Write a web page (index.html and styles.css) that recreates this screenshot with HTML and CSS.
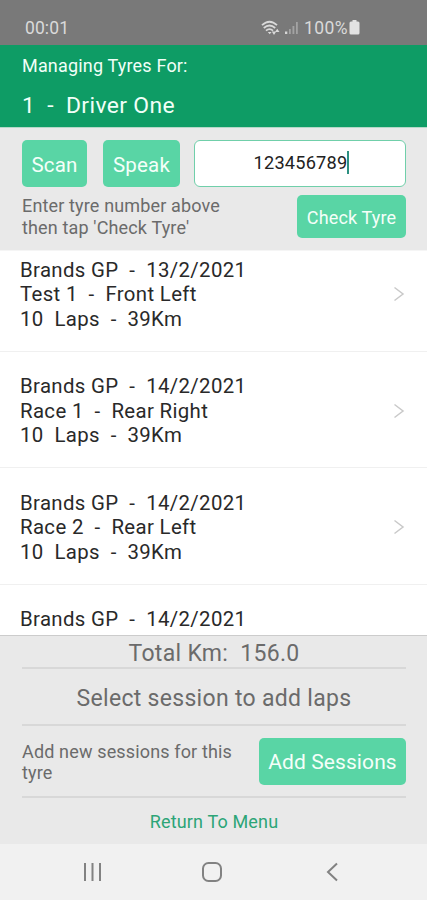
FILE: index.html
```html
<!DOCTYPE html>
<html lang="en">
<head>
<meta charset="utf-8">
<title>Managing Tyres</title>
<link rel="stylesheet" href="styles.css">
</head>
<body>
<div class="screen">
  <div class="status">
    <span class="clock">00:01</span>
    <svg class="wifi" width="20" height="16" viewBox="0 0 20 16" fill="none" stroke="#dadada" stroke-width="1.8"><path d="M1 5.200Q8.500-1.800 16 5.200M2.800 8Q8.500 3 14.200 8M5 10.700Q8.500 7.600 12 10.700"/><path d="M6.800 12l1.900 2.200 1.900-2.200zM10.800 11.500h4.400l-2.200 3.500zM14 12l2.200-3.200 2.300 3.200z" fill="#dadada" stroke="none"/></svg>
    <svg class="signal" width="14" height="14" viewBox="0 0 14 14"><path fill="#d6d6d6" d="M0 10.500h2.300V13H0z"/><path fill="#a3a3a3" d="M4 8h1.800v5H4zM7.500 5h1.800v8H7.500zM11 1h1.800v12H11z"/></svg>
    <span class="percent">100%</span>
    <svg class="battery" width="11" height="15" viewBox="0 0 11 15"><path fill="#e2e2e2" d="M3.500 0h4v1.500h1.500q1.500 0 1.500 1.500v10q0 1.500-1.500 1.500H2Q.5 14.500.5 13V3Q.5 1.500 2 1.500h1.500z"/></svg>
  </div>
  <header class="header">
    <div class="caption">Managing Tyres For:</div>
    <div class="driver">1&nbsp; -&nbsp; Driver One</div>
  </header>
  <section class="search">
    <div class="tools">
      <button class="btn scan">Scan</button>
      <button class="btn speak">Speak</button>
      <div class="field"><span>123456789</span><i class="caret"></i></div>
    </div>
    <div class="check-row">
      <p class="hint">Enter tyre number above<br>then tap 'Check Tyre'</p>
      <button class="btn check">Check Tyre</button>
    </div>
  </section>
  <main class="list">
    <article class="item"><p>Brands GP&nbsp; -&nbsp; 13/2/2021<br>Test 1&nbsp; -&nbsp; Front Left<br>10&nbsp; Laps&nbsp; -&nbsp; 39Km</p><svg class="chev" width="12" height="16" viewBox="0 0 12 16"><path d="M1.500 1.500l8.500 6.500-8.500 6.500"/></svg></article>
    <article class="item"><p>Brands GP&nbsp; -&nbsp; 14/2/2021<br>Race 1&nbsp; -&nbsp; Rear Right<br>10&nbsp; Laps&nbsp; -&nbsp; 39Km</p><svg class="chev" width="12" height="16" viewBox="0 0 12 16"><path d="M1.500 1.500l8.500 6.500-8.500 6.500"/></svg></article>
    <article class="item"><p>Brands GP&nbsp; -&nbsp; 14/2/2021<br>Race 2&nbsp; -&nbsp; Rear Left<br>10&nbsp; Laps&nbsp; -&nbsp; 39Km</p><svg class="chev" width="12" height="16" viewBox="0 0 12 16"><path d="M1.500 1.500l8.500 6.500-8.500 6.500"/></svg></article>
    <article class="item"><p>Brands GP&nbsp; -&nbsp; 14/2/2021</p></article>
  </main>
  <section class="summary">
    <div class="total">Total Km:&nbsp; 156.0</div>
    <div class="select">Select session to add laps</div>
    <div class="add-row">
      <p class="hint">Add new sessions for this<br>tyre</p>
      <button class="btn add">Add Sessions</button>
    </div>
    <a class="return">Return To Menu</a>
  </section>
  <nav class="nav">
    <svg width="20" height="20" viewBox="0 0 20 20"><path d="M2 1v18M9.500 1v18M17 1v18"/></svg>
    <svg width="22" height="22" viewBox="0 0 22 22"><rect x="2" y="2" width="18" height="18" rx="5.500"/></svg>
    <svg width="14" height="20" viewBox="0 0 14 20"><path d="M12 1.500L3 10l9 8.500"/></svg>
  </nav>
</div>
</body>
</html>
```
FILE: styles.css
```css
* { box-sizing: border-box; }
body { margin: 0; font-family: Roboto, "Liberation Sans", sans-serif; }
p { margin: 0; }
span, p, a, button { white-space: nowrap; }
.screen { width: 427px; height: 900px; display: flex; flex-direction: column; overflow: hidden; background: #fff; }
.status { height: 45px; flex: none; background: #797979; color: #dadada; display: flex; align-items: center; padding: 10px 67px 0 25px; font-size: 17.5px; }
.clock { flex: 1; letter-spacing: 0.1px; }
.wifi { margin-right: 4px; }
.signal { margin-right: 5px; }
.percent { letter-spacing: 0.4px; margin-right: 1px; }
.header { height: 82px; flex: none; background: #0e9c65; color: #f1fff8; padding: 9px 22px 0; }
.caption { font-size: 18px; line-height: 24px; letter-spacing: 0.18px; }
.driver { font-size: 22.9px; line-height: 28px; margin-top: 14px; letter-spacing: 0.35px; }
.search { height: 123px; flex: none; background: #e9e9e9; padding: 12px 21px 0 22px; border-top: 1px solid #b4d8c8; }
.tools { display: flex; height: 47px; }
.btn { border: 0; border-radius: 5px; background: #59d5a5; color: #f4fff9; font: 20px Roboto, sans-serif; padding: 0; }
.scan, .speak { font-size: 20.5px; letter-spacing: 0.2px; }
.scan { width: 65px; margin-right: 16px; padding-top: 2px; }
.speak { width: 77px; margin-right: 14px; padding-top: 2px; }
.field { flex: 1; background: #fff; border: 1px solid #70cfaa; border-radius: 6px; display: flex; align-items: center; justify-content: center; font-size: 18.2px; letter-spacing: 0.2px; color: #222; padding: 0 0 2px 3px; }
.caret { width: 2px; height: 23px; background: #2c9081; }
.check-row { display: flex; justify-content: space-between; margin-top: 8px; }
.hint { font-size: 18px; line-height: 21.5px; letter-spacing: 0.15px; color: #6b6b6b; }
.check { width: 109px; height: 43px; font-size: 18px; letter-spacing: 0.15px; padding-top: 2px; }
.list { height: 385px; flex: none; overflow: hidden; border-top: 1px solid #f5f5f5; }
.item { height: 116.5px; border-bottom: 1px solid #f0f0f0; padding: 22.5px 22px 0 20px; display: flex; justify-content: space-between; font-size: 20.4px; line-height: 24.5px; color: #292929; letter-spacing: 0.35px; }
.item:first-child { margin-top: -16px; }
.chev { margin-top: 28.5px; fill: none; stroke: #c9c9c9; stroke-width: 1.5; }
.summary { height: 209px; flex: none; background: #e9e9e9; border-top: 1px solid #ccc; padding: 0 21px 0 22px; color: #6b6b6b; display: flex; flex-direction: column; text-align: center; }
.summary > * { flex: none; }
.total { height: 33px; border-bottom: 2px solid #d8d8d8; font-size: 23px; line-height: 35px; letter-spacing: 0.3px; }
.select { height: 57px; border-bottom: 2px solid #d8d8d8; font-size: 23px; line-height: 59px; letter-spacing: 0.3px; }
.add-row { height: 72px; border-bottom: 2px solid #d8d8d8; display: flex; justify-content: space-between; align-items: center; text-align: left; }
.add-row .hint { padding-top: 2px; }
.add { width: 147px; height: 47px; font-size: 21px; letter-spacing: 0.1px; padding-top: 2px; }
.return { font-size: 18px; line-height: 48px; letter-spacing: 0.15px; color: #2ca577; }
.nav { flex: 1; background: #f1f1f1; display: flex; justify-content: space-between; align-items: center; padding: 0 88px 0 83px; }
.nav svg { fill: none; stroke: #828282; stroke-width: 2; }
.nav svg:nth-child(2) { margin-right: 5px; }
```
